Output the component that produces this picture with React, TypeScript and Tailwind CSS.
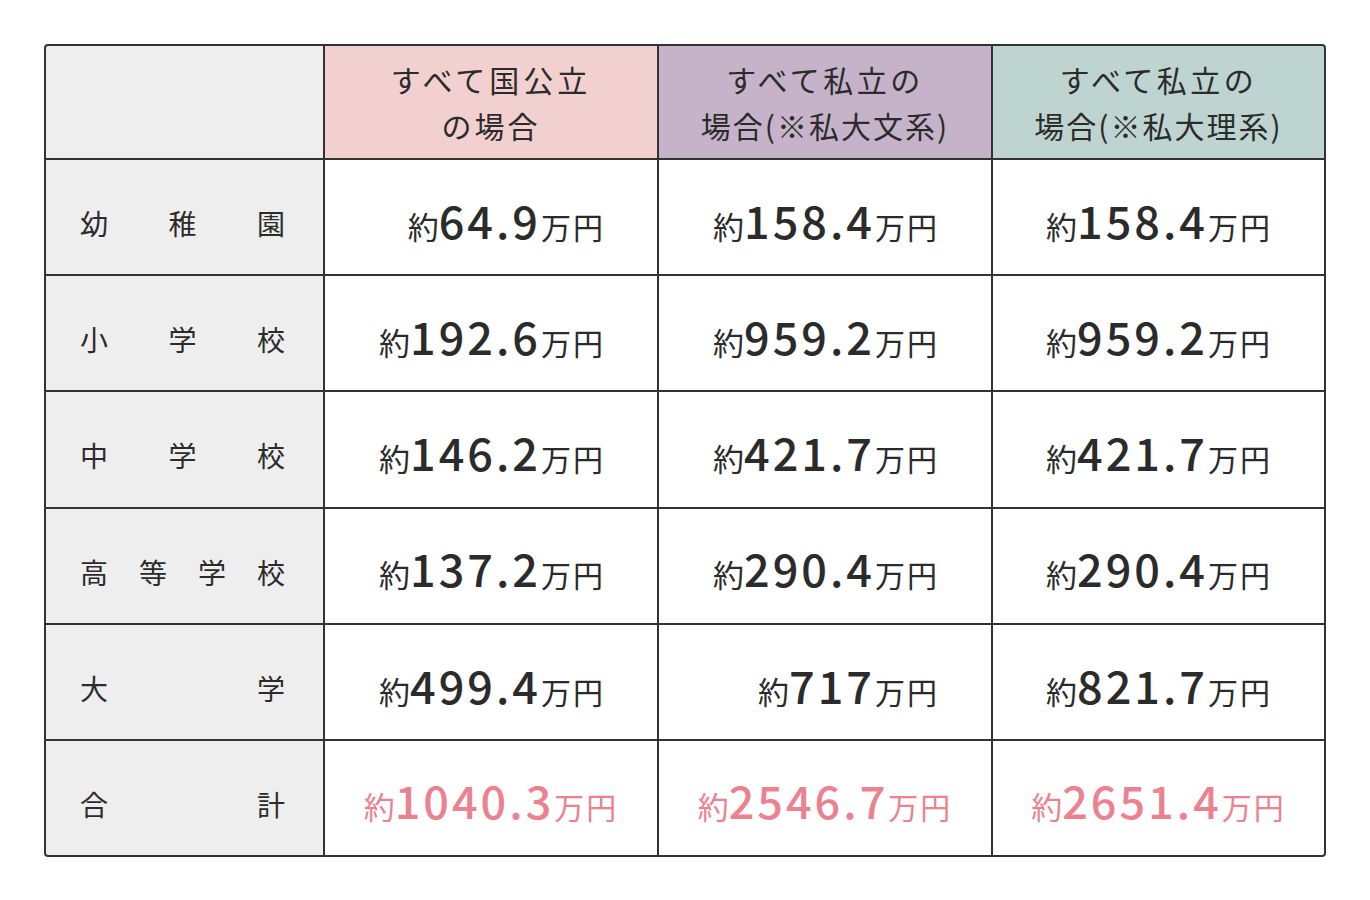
const font = { fontFamily: '"Noto Sans CJK JP", "Noto Sans", sans-serif' };

const headers = [
  { lines: [["すべて国公立", "tracking-[4px]"], ["の場合", "tracking-[3px]"]], bg: "bg-[#f1d0cf]" },
  { lines: [["すべて私立の", "tracking-[3.5px]"], ["場合(※私大文系)", "tracking-[2px]"]], bg: "bg-[#c6b3c9]" },
  { lines: [["すべて私立の", "tracking-[3.5px]"], ["場合(※私大理系)", "tracking-[2px]"]], bg: "bg-[#bdd4d0]" },
];

const rows = [
  { label: ["幼", "稚", "園"], values: ["64.9", "158.4", "158.4"] },
  { label: ["小", "学", "校"], values: ["192.6", "959.2", "959.2"] },
  { label: ["中", "学", "校"], values: ["146.2", "421.7", "421.7"] },
  { label: ["高", "等", "学", "校"], values: ["137.2", "290.4", "290.4"] },
  { label: ["大", "学"], values: ["499.4", "717", "821.7"] },
];

const totals = ["1040.3", "2546.7", "2651.4"];

function Amount({ value, pink }: { value: string; pink?: boolean }) {
  return (
    <span className={`flex items-baseline ${pink ? "text-[#ec8190]" : "text-[#2b2b2b]"}`}>
      <span className="text-[31px]">約</span>
      <span className="text-[45px] tracking-[3px] font-medium leading-none">{value}</span>
      <span className="text-[30px] tracking-[2px]">万円</span>
    </span>
  );
}

function Label({ chars }: { chars: string[] }) {
  return (
    <div className="bg-[#eeeeee] flex items-center justify-between pl-[34px] pr-[38px] pt-[12px] text-[28px] text-[#2b2b2b]">
      {chars.map((c, i) => (
        <span key={i}>{c}</span>
      ))}
    </div>
  );
}

export default function App() {
  return (
    <div className="bg-white min-h-[900px] pt-[44px] px-[44px]" style={font}>
      <div className="w-[1282px] border-2 border-[#333333] rounded-[4px] overflow-hidden bg-[#333333] grid grid-cols-[277px_332px_332px_331px] grid-rows-[112px_repeat(6,114.2px)] gap-[2px]">
        <div className="bg-[#eeeeee]" />
        {headers.map((h, i) => (
          <div
            key={i}
            className={`${h.bg} flex flex-col items-center justify-center text-[30px] leading-[46px] text-[#2b2b2b]`}
          >
            {h.lines.map(([text, track], j) => (
              <span key={j} className={track}>
                {text}
              </span>
            ))}
          </div>
        ))}

        {rows.map((r, i) => (
          <>
            <Label key={`l${i}`} chars={r.label} />
            {r.values.map((v, j) => (
              <div key={`v${i}-${j}`} className="bg-white flex items-center justify-end pr-[52px] pt-[12px]">
                <Amount value={v} />
              </div>
            ))}
          </>
        ))}

        <Label chars={["合", "計"]} />
        {totals.map((v, j) => (
          <div key={j} className="bg-white flex items-center justify-center pt-[10px]">
            <Amount value={v} pink />
          </div>
        ))}
      </div>
    </div>
  );
}
